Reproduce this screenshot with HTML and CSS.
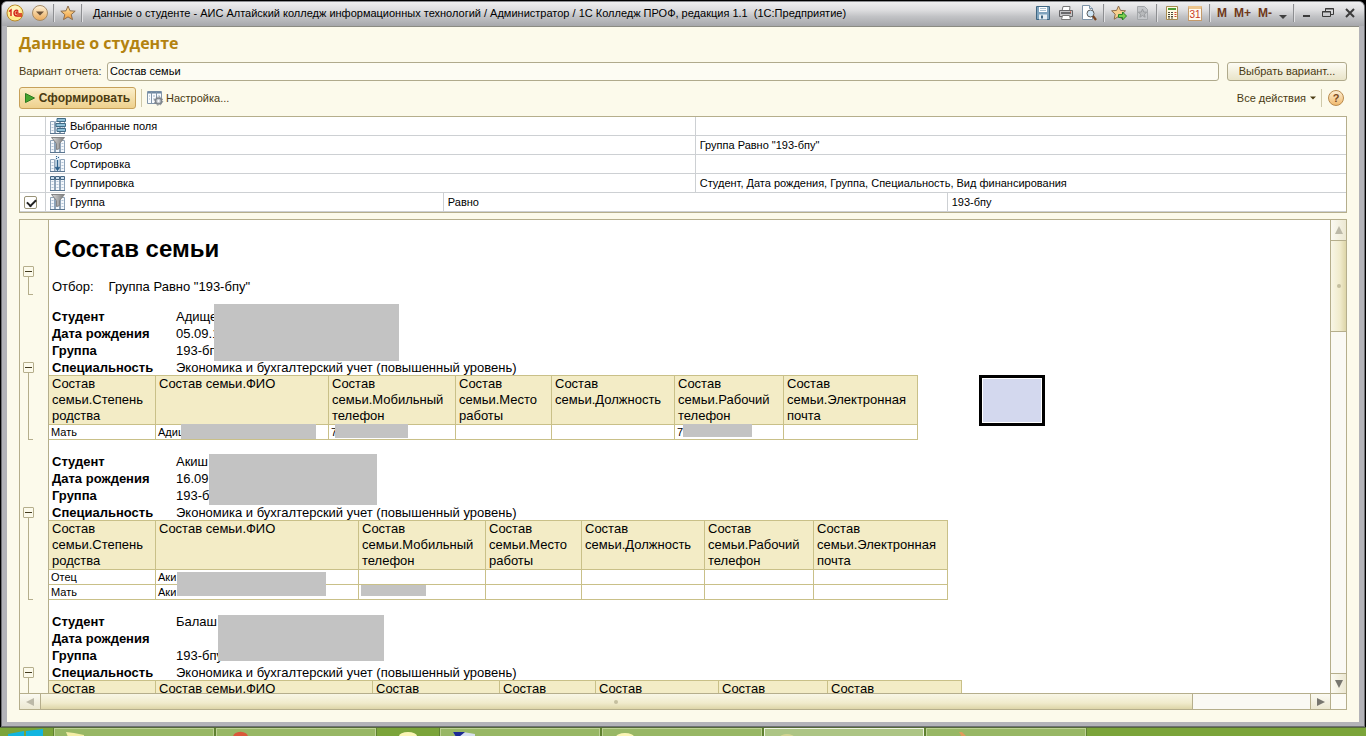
FILE: index.html
```html
<!DOCTYPE html>
<html lang="ru">
<head>
<meta charset="utf-8">
<title>Данные о студенте</title>
<link rel="stylesheet" href="styles.css">
</head>
<body>
<svg class="defs" aria-hidden="true">
  <defs>
    <linearGradient id="gold" x1="0" y1="0" x2="0" y2="1"><stop offset="0" stop-color="#fff3d8"/><stop offset="1" stop-color="#e9a95a"/></linearGradient>
    <linearGradient id="starfill" x1="0" y1="0" x2="0" y2="1"><stop offset="0" stop-color="#ffe9a8"/><stop offset="1" stop-color="#f09a3c"/></linearGradient>
    <linearGradient id="metal" x1="0" y1="0" x2="1" y2="0"><stop offset="0" stop-color="#dcdcdc"/><stop offset="1" stop-color="#7a7a7a"/></linearGradient>
    <symbol id="cols" viewBox="0 0 16 16">
      <path d="M.5 3.500h4v12h-4zM5.500 3.500h4v12h-4zM10.500 3.500h4v12h-4z" fill="#f4f8fc" stroke="#8ea3b8"/>
      <path d="M1.500 6.500h2M1.500 9.500h2M1.500 12.500h2M6.500 6.500h2M6.500 9.500h2M6.500 12.500h2M11.500 6.500h2M11.500 9.500h2M11.500 12.500h2" stroke="#b4c5d6"/>
      <path d="M0 15.500h15" stroke="#5b7690"/>
    </symbol>
    <symbol id="funnel" viewBox="0 0 16 16">
      <use href="#cols"/>
      <path d="M1.500 .5h13l-5 6v5l-3 1v-6z" fill="url(#metal)" stroke="#858585"/>
    </symbol>
  </defs>
</svg>
<div class="window">
  <header class="titlebar">
    <button class="tool" aria-label="Главное меню"><svg width="18" height="18" viewBox="0 0 18 18"><circle cx="9" cy="9" r="8" fill="#ffe98a" stroke="#b9892c"/><circle cx="9" cy="7" r="5.500" fill="#fff5bd"/><path d="M3 7.500l2-1.500v6M12 7c-1-1.500-4-1-4 2s2 3 3 3h5M12.500 8.500c-1-1-2.500-.5-2.500 .5s1 1 1.500 1h4.500" fill="none" stroke="#d21f14" stroke-width="1.400"/></svg></button>
    <button class="tool" aria-label="Меню"><svg width="18" height="18" viewBox="0 0 18 18"><circle cx="9" cy="9" r="7.500" fill="url(#gold)" stroke="#a58a66"/><path d="M5 7.500h8l-4 4z" fill="#6a5138"/></svg></button>
    <span class="sep"></span>
    <button class="tool" aria-label="Избранное"><svg width="16" height="16" viewBox="0 0 16 16"><path d="M8 1l2 4.800 5.200.4-4 3.400 1.300 5L8 11.900l-4.500 2.700 1.300-5-4-3.400L6 5.800z" fill="url(#starfill)" stroke="#8d6d4c"/></svg></button>
    <span class="sep"></span>
    <span class="caption">Данные о студенте - АИС Алтайский колледж информационных технологий / Администратор / 1С Колледж ПРОФ, редакция 1.1&nbsp; (1С:Предприятие)</span>
    <div class="tools">
      <button class="tool" aria-label="Сохранить"><svg width="16" height="16" viewBox="0 0 16 16"><path d="M1.500 1.500h13v13h-13z" fill="#7fa3bd" stroke="#3f6682"/><path d="M4 2h8v5H4z" fill="#fff"/><path d="M5 3.500h6M5 5.500h6" stroke="#a8bfce"/><path d="M4 9.500h8v5H4z" fill="#e6eef3"/><path d="M6 10.500h2v3H6z" fill="#3f6682"/></svg></button>
      <button class="tool" aria-label="Печать"><svg width="16" height="16" viewBox="0 0 16 16"><path d="M4 6l1-4.500h7L11.500 6" fill="#fff" stroke="#777"/><path d="M1.500 5.500h13v6h-13z" fill="#c4c4c6" stroke="#656568"/><path d="M3 8h10" stroke="#4b4b4e" stroke-width="1.500"/><path d="M4.500 10.500h7l1 4h-9z" fill="#fff" stroke="#777"/><path d="M12 7h1" stroke="#e34b2d"/></svg></button>
      <button class="tool" aria-label="Предварительный просмотр"><svg width="16" height="16" viewBox="0 0 16 16"><path d="M1.500 .5h7l3 3v11h-10z" fill="#fff" stroke="#7f94a8"/><path d="M8.500 .5v3h3" fill="#dbe6ef" stroke="#7f94a8"/><circle cx="9.500" cy="8.500" r="3.500" fill="#cfe5f5" stroke="#5a5a5a"/><path d="M12 11l3 4" stroke="#754320" stroke-width="2.200"/></svg></button>
      <span class="sep"></span>
      <button class="tool" aria-label="Добавить в избранное"><svg width="16" height="16" viewBox="0 0 16 16"><path d="M7.500 1l2 4.400 5 .4-3.700 3.400 1 5-4.300-2.700-4.300 2.700 1-5L.6 5.800l5-.4z" fill="#f7cf8e" stroke="#8d6d4c"/><path d="M7.500 9.500h4v-2.500l4 4-4 4v-2.500h-4z" fill="#7cd04d" stroke="#26842b"/></svg></button>
      <button class="tool" aria-label="Перейти по ссылке" disabled><svg width="16" height="16" viewBox="0 0 16 16"><path d="M3.500 1.500h7l3 3v10h-10z" fill="#c5c7ca" stroke="#a4a7aa"/><path d="M8.500 4l1.200 3 3 .2-2.300 2 .7 3-2.600-1.700-2.600 1.700.7-3-2.300-2 3-.2z" fill="#b8babc" stroke="#9a9c9f"/></svg></button>
      <span class="sep"></span>
      <button class="tool" aria-label="Калькулятор"><svg width="16" height="16" viewBox="0 0 16 16"><path d="M2.500 1.500h11v13h-11z" fill="#fffbe3" stroke="#a78b50"/><path d="M4 3h8v2H4z" fill="#4f9d35"/><path d="M4 7.500h2m1 0h2M4 9.500h2m1 0h2M4 11.500h2m1 0h2M4 13h2m1 0h2" stroke="#4d4538"/><path d="M10.500 7.500h2M10.500 9.500h2M10.500 11.500h2" stroke="#d2412a"/></svg></button>
      <button class="tool day" aria-label="Календарь">31</button>
      <span class="sep"></span>
      <button class="tool mem">M</button>
      <button class="tool mem">M+</button>
      <button class="tool mem">M-</button>
      <button class="tool" aria-label="Ещё"><svg width="8" height="16" viewBox="0 0 8 16"><path d="M0 10h8l-4 4z" fill="#3f3f3f"/></svg></button>
      <span class="sep"></span>
    </div>
    <div class="winctl">
      <button class="tool" aria-label="Свернуть"><svg width="9" height="14" viewBox="0 0 9 14"><path d="M1 10h7" stroke="#3b3b3b" stroke-width="2"/></svg></button>
      <button class="tool" aria-label="Восстановить"><svg width="12" height="14" viewBox="0 0 12 14"><path d="M3.500 5V2.500h8v6H9M3 3h9" fill="none" stroke="#3b3b3b"/><path d="M.5 5.500h8v5h-8zM0 6h9" fill="none" stroke="#3b3b3b"/></svg></button>
      <button class="tool" aria-label="Закрыть"><svg width="10" height="14" viewBox="0 0 10 14"><path d="M1 3l8 8M9 3l-8 8" stroke="#3b3b3b" stroke-width="2"/></svg></button>
    </div>
  </header>

  <main class="client">
    <h1 class="heading">Данные о студенте</h1>
    <div class="variant">
      <label for="variant">Вариант отчета:</label>
      <input id="variant" type="text" value="Состав семьи">
      <button class="choose">Выбрать вариант...</button>
    </div>
    <div class="commands">
      <button class="run"><svg width="10" height="10" viewBox="0 0 10 10"><path d="M.5 .5l9 4.500-9 4.500z" fill="#45a62f" stroke="#2e7a22"/></svg>Сформировать</button>
      <span class="vline"></span>
      <button class="flat"><svg width="16" height="16" viewBox="0 0 16 16"><path d="M.5 1.500h14v12H.5z" fill="#f8fbfe" stroke="#8296aa"/><path d="M1 2.500h13" stroke="#6d87a1" stroke-width="2"/><path d="M4.500 2v11M9.500 2v11" stroke="#8296aa"/><path d="M2 6h1M2 9h1M6 6h2M6 9h2M11 6h2" stroke="#a4b4c4"/><circle cx="11.500" cy="11" r="3" fill="#c6cbd0" stroke="#7f858c" stroke-width="1.500"/><circle cx="11.500" cy="11" r="4.200" fill="none" stroke="#7f858c" stroke-dasharray="1.600 1.700"/><circle cx="11.500" cy="11" r="1" fill="#fff"/></svg>Настройка...</button>
      <button class="flat all">Все действия<svg width="6" height="4" viewBox="0 0 6 4"><path d="M0 .5h6l-3 3z" fill="#4a3b12"/></svg></button>
      <span class="vline"></span>
      <button class="help" aria-label="Справка">?</button>
    </div>

    <table class="settings">
      <colgroup><col class="s-check"><col class="s-name"><col class="s-mid"><col class="s-mid"><col></colgroup>
      <tbody>
        <tr><td></td><td colspan="2"><span class="field"><svg width="16" height="16" viewBox="0 0 16 16"><use href="#cols"/><path d="M7 .5h8.500v3H7zM6 5.500h9.500v3H6zM7 10.500h8.500v3H7z" fill="#8fc0d8" stroke="#416b85"/></svg>Выбранные поля</span></td><td colspan="2"></td></tr>
        <tr><td></td><td colspan="2"><span class="field"><svg width="16" height="16"><use href="#funnel"/></svg>Отбор</span></td><td colspan="2">Группа Равно "193-бпу"</td></tr>
        <tr><td></td><td colspan="2"><span class="field"><svg width="16" height="16" viewBox="0 0 16 16"><use href="#cols"/><path d="M5.500 0h4v15h-4z" fill="#dcebf6"/><path d="M7.500 4v9M5.500 11l2 3 2-3" fill="none" stroke="#2f618b" stroke-width="1.400"/><path d="M6 .5h1m1 1h1m-3 1h1" stroke="#2f618b"/></svg>Сортировка</span></td><td colspan="2"></td></tr>
        <tr><td></td><td colspan="2"><span class="field"><svg width="16" height="16" viewBox="0 0 16 16"><use href="#cols"/><path d="M.5 1.500h4v3h-4zM5.500 1.500h4v3h-4zM10.500 1.500h4v3h-4z" fill="#c9dceb" stroke="#446582"/></svg>Группировка</span></td><td colspan="2">Студент, Дата рождения, Группа, Специальность, Вид финансирования</td></tr>
        <tr><td class="checkcell"><input type="checkbox" checked aria-label="Использовать отбор по группе"></td><td><span class="field"><svg width="16" height="16"><use href="#funnel"/></svg>Группа</span></td><td colspan="2">Равно</td><td>193-бпу</td></tr>
      </tbody>
    </table>

    <div class="report">
      <div class="sheet">
        <section class="band intro">
          <div class="gutter"><button class="fold" aria-label="Свернуть отбор"></button><i class="branch"></i></div>
          <div class="body">
            <h2>Состав семьи</h2>
            <p class="filter"><span>Отбор:</span><span>Группа Равно "193-бпу"</span></p>
          </div>
        </section>

        <section class="band">
          <div class="gutter"><button class="fold" aria-label="Свернуть"></button><i class="branch"></i></div>
          <div class="body">
            <dl><dt>Студент</dt><dd>Адище</dd><dt>Дата рождения</dt><dd>05.09.1</dd><dt>Группа</dt><dd>193-бпу</dd><dt>Специальность</dt><dd>Экономика и бухгалтерский учет (повышенный уровень)</dd></dl>
            <i class="mask person-a"></i>
            <div class="row">
              <table class="family">
                <colgroup><col class="c-kin"><col class="c-fio-a"><col class="c-mob"><col class="c-place"><col class="c-post"><col class="c-work"><col class="c-mail"></colgroup>
                <thead><tr><th>Состав семьи.Степень родства</th><th>Состав семьи.ФИО</th><th>Состав семьи.Мобильный телефон</th><th>Состав семьи.Место работы</th><th>Состав семьи.Должность</th><th>Состав семьи.Рабочий телефон</th><th>Состав семьи.Электронная почта</th></tr></thead>
                <tbody><tr><td>Мать</td><td>Адищ<i class="mask fio-a"></i></td><td>7<i class="mask phone-a"></i></td><td></td><td></td><td>7<i class="mask phone-b"></i></td><td></td></tr></tbody>
              </table>
              <div class="cursor"></div>
            </div>
          </div>
        </section>

        <section class="band">
          <div class="gutter"><button class="fold" aria-label="Свернуть"></button><i class="branch"></i></div>
          <div class="body">
            <dl><dt>Студент</dt><dd>Акиш</dd><dt>Дата рождения</dt><dd>16.09</dd><dt>Группа</dt><dd>193-бп</dd><dt>Специальность</dt><dd>Экономика и бухгалтерский учет (повышенный уровень)</dd></dl>
            <i class="mask person-b"></i>
            <table class="family">
              <colgroup><col class="c-kin"><col class="c-fio-b"><col class="c-mob"><col class="c-place"><col class="c-post"><col class="c-work"><col class="c-mail"></colgroup>
              <thead><tr><th>Состав семьи.Степень родства</th><th>Состав семьи.ФИО</th><th>Состав семьи.Мобильный телефон</th><th>Состав семьи.Место работы</th><th>Состав семьи.Должность</th><th>Состав семьи.Рабочий телефон</th><th>Состав семьи.Электронная почта</th></tr></thead>
              <tbody>
                <tr><td>Отец</td><td>Аки<i class="mask fio-b"></i></td><td></td><td></td><td></td><td></td><td></td></tr>
                <tr><td>Мать</td><td>Аки</td><td><i class="mask phone-c"></i></td><td></td><td></td><td></td><td></td></tr>
              </tbody>
            </table>
          </div>
        </section>

        <section class="band">
          <div class="gutter"><button class="fold" aria-label="Свернуть"></button><i class="branch"></i></div>
          <div class="body">
            <dl><dt>Студент</dt><dd>Балаш</dd><dt>Дата рождения</dt><dd></dd><dt>Группа</dt><dd>193-бпу</dd><dt>Специальность</dt><dd>Экономика и бухгалтерский учет (повышенный уровень)</dd></dl>
            <i class="mask person-c"></i>
            <table class="family">
              <colgroup><col class="c-kin"><col class="c-fio-c"><col class="c-mob"><col class="c-place"><col class="c-post"><col class="c-work"><col class="c-mail"></colgroup>
              <thead><tr><th>Состав семьи.Степень родства</th><th>Состав семьи.ФИО</th><th>Состав семьи.Мобильный телефон</th><th>Состав семьи.Место работы</th><th>Состав семьи.Должность</th><th>Состав семьи.Рабочий телефон</th><th>Состав семьи.Электронная почта</th></tr></thead>
            </table>
          </div>
        </section>
      </div>
      <div class="vbar">
        <button class="arrow dim" aria-label="Вверх"><svg width="8" height="8" viewBox="0 0 8 8"><path d="M4 0l4 8H0z"/></svg></button>
        <div class="thumb"></div>
        <div class="track"></div>
        <button class="arrow" aria-label="Вниз"><svg width="8" height="8" viewBox="0 0 8 8"><path d="M0 0h8L4 8z"/></svg></button>
      </div>
      <div class="hbar">
        <button class="arrow dim" aria-label="Влево"><svg width="8" height="8" viewBox="0 0 8 8"><path d="M8 0v8L0 4z"/></svg></button>
        <div class="thumb"></div>
        <div class="track"></div>
        <button class="arrow" aria-label="Вправо"><svg width="8" height="8" viewBox="0 0 8 8"><path d="M0 0l8 4-8 4z"/></svg></button>
      </div>
      <div class="corner"></div>
    </div>
  </main>
</div>

<nav class="taskbar">
  <button class="start" aria-label="Пуск"><svg width="36" height="8" viewBox="0 0 36 8"><path d="M0 6l16-3v5H0zM18 3l17-2v7H18z" fill="#12b5e0"/></svg></button>
  <button class="task" aria-label="Проводник"><svg width="24" height="8" viewBox="0 0 24 8"><path d="M1 3l8 1 10 2v2H3z" fill="#f4eda6"/></svg></button>
  <button class="task" aria-label="Браузер"><svg width="24" height="8" viewBox="0 0 24 8"><path d="M6 8a7 5 0 0 1 15 0z" fill="#d9583a"/></svg></button>
  <button class="pin" aria-label="1С"><svg width="24" height="8" viewBox="0 0 24 8"><path d="M3 8a9 4 0 0 1 18 0z" fill="#fbf5b6"/></svg></button>
  <button class="task" aria-label="Документ"><svg width="24" height="8" viewBox="0 0 24 8"><path d="M2 3h10l12 2v3H5z" fill="#d7dfee"/><path d="M2 3h12l-6 5H5z" fill="#1b2a93"/></svg></button>
  <button class="task" aria-label="1С:Предприятие"><svg width="24" height="8" viewBox="0 0 24 8"><path d="M3 8a9 4 0 0 1 18 0z" fill="#fbf5b6"/></svg></button>
  <button class="task active" aria-label="1С:Предприятие"><svg width="24" height="8" viewBox="0 0 24 8"><path d="M5 8a7 3 0 0 1 14 0z" fill="#d3d492"/></svg></button>
  <button class="task" aria-label="Paint"><svg width="24" height="8" viewBox="0 0 24 8"><path d="M22 3l3 0 5 5h-5z" fill="#e29a5c"/></svg></button>
</nav>
</body>
</html>
```

FILE: styles.css
```css
* { box-sizing: border-box; }

body {
  margin: 0;
  height: 100vh;
  display: flex;
  flex-direction: column;
  overflow: hidden;
  background: #000;
  font: 11px/14px "Liberation Sans", Arial, sans-serif;
  color: #000;
}

button {
  margin: 0;
  padding: 0;
  border: 0;
  background: none;
  font: inherit;
  color: #4a3b12;
}

svg { display: block; flex: none; overflow: visible; }
.defs { position: absolute; width: 0; height: 0; }

.window {
  flex: 1;
  min-height: 0;
  display: flex;
  flex-direction: column;
  margin: 1px 1px 0;
  padding: 0 5px 4px;
  border: 1px solid #6f7074;
  border-top-color: #8d8e92;
  border-radius: 6px 6px 0 0;
  background: #b3b3b8;
}

/* Title bar */
.titlebar {
  flex: none;
  display: flex;
  align-items: center;
  height: 24px;
  margin: 0 -5px;
  padding: 0 3px 2px 0;
  border-radius: 5px 5px 0 0;
  background: linear-gradient(#efeff0, #dcdcde 35%, #c2c3c6 60%, #a6a7ab);
}

.tool { display: flex; align-items: center; justify-content: center; }
.titlebar > .tool { width: 24px; }
.titlebar > .tool:first-child { width: 26px; }
.titlebar > .sep { margin: 0 1px; }
.sep {
  width: 2px;
  height: 18px;
  border-left: 1px solid #8d8e91;
  background: #e0e0e2;
}
.caption {
  flex: 1;
  min-width: 0;
  overflow: hidden;
  white-space: nowrap;
  padding-left: 9px;
  line-height: 18px;
}
.tools { display: flex; align-items: center; gap: 7px; }
.tools .sep { margin: 0 -1px; }
.mem { font-weight: bold; font-size: 12px; color: #6e3819; }
.day {
  width: 14px;
  height: 15px;
  margin: 0 1px;
  border: 1px solid #c49a6a;
  border-top: 3px solid #ecc48c;
  background: #fffaf0;
  color: #c8371f;
  font-size: 10px;
  line-height: 11px;
}
.winctl { display: flex; align-items: center; gap: 11px; padding: 0 6px 0 8px; }

/* Form */
.client {
  flex: 1;
  min-height: 0;
  display: flex;
  flex-direction: column;
  padding: 5px 12px 12px;
  border-top: 1px solid #8b8b82;
  background: #fcfaeb;
}
.heading {
  margin: 0;
  font: bold 16px/22px "Open Sans", "Noto Sans", sans-serif;
  color: #b3820f;
}
.variant { display: flex; align-items: center; height: 20px; margin-top: 7px; color: #4a3b12; }
.variant label { width: 88px; }
.variant input {
  flex: 1;
  min-width: 0;
  height: 19px;
  padding: 0 2px;
  border: 1px solid #b0aa8c;
  border-radius: 3px;
  background: #fdfcf3;
  font: inherit;
  color: #000;
}
.choose {
  width: 120px;
  height: 19px;
  margin-left: 8px;
  border: 1px solid #b0aa8c;
  border-radius: 3px;
  background: linear-gradient(#fdfcf4, #e9e4c9);
}
.commands { display: flex; align-items: center; height: 22px; margin: 6px 0 7px; }
.run {
  display: flex;
  align-items: center;
  justify-content: center;
  gap: 4px;
  width: 117px;
  height: 22px;
  border: 1px solid #c7a15a;
  border-radius: 3px;
  background: linear-gradient(#fbefca, #eed08c);
  font-weight: bold;
  font-size: 12px;
}
.vline { width: 1px; height: 18px; margin: 0 5px; background: #cfc9aa; }
.flat { display: flex; align-items: center; gap: 3px; }
.all { margin-left: auto; gap: 4px; }
.help {
  width: 16px;
  height: 16px;
  margin: 0 3px 0 1px;
  border: 1px solid #b98b4e;
  border-radius: 50%;
  background: linear-gradient(#fdeed2, #f1ba6e);
  line-height: 14px;
  font-weight: bold;
  color: #7a4a1e;
}

/* Report settings */
.settings {
  width: 100%;
  table-layout: fixed;
  border-collapse: separate;
  border-spacing: 0;
  border: 1px solid #b5ae8c;
  background: #fff;
}
.settings td {
  height: 19px;
  padding: 0 4px;
  border-right: 1px solid #cdd0d3;
  border-bottom: 1px solid #cdd0d3;
  white-space: nowrap;
}
.settings td:last-child { border-right: 0; }
.s-check { width: 26px; }
.s-name { width: 30%; }
.s-mid { width: 19%; }
.field { display: flex; align-items: center; gap: 4px; }
.checkcell input {
  appearance: none;
  display: block;
  width: 13px;
  height: 13px;
  margin: 0;
  border: 1px solid #9a9478;
  border-radius: 2px;
  background: #fff;
}
.checkcell input:checked::before {
  content: "";
  display: block;
  width: 7px;
  height: 4px;
  margin: 2px;
  border: solid #222;
  border-width: 0 0 2px 2px;
  transform: rotate(-45deg);
}

/* Report */
.report {
  flex: 1;
  min-height: 0;
  display: grid;
  grid-template: minmax(0, 1fr) 16px / minmax(0, 1fr) 16px;
  margin-top: 6px;
  border: 1px solid #b5ae8c;
  background: #fff;
}
.sheet { overflow: hidden; font-size: 13px; }
.band { display: flex; }
.gutter {
  flex: none;
  width: 29px;
  display: flex;
  flex-direction: column;
  padding: 55px 0 12px 3px;
  border-right: 1px solid #b5ae8c;
  background: #fcfaeb;
}
.fold {
  flex: none;
  width: 11px;
  height: 11px;
  padding: 4px 1px;
  border: 1px solid #b5ae8c;
  border-radius: 1px;
  background: #443c20 content-box;
}
.branch {
  flex: 1;
  width: 5px;
  margin-left: 5px;
  border: solid #b5ae8c;
  border-width: 0 0 1px 1px;
}
.body { position: relative; flex: 1; min-width: 0; padding-bottom: 12px; }
.intro .gutter { padding-top: 46px; }
.intro h2 { margin: 0; padding: 14px 0 0 5px; font-size: 24px; line-height: 30px; }
.filter { display: flex; gap: 15px; margin: 15px 0 0; padding-left: 3px; line-height: 16px; }
dl {
  display: grid;
  grid-template-columns: 124px 1fr;
  grid-auto-rows: 17px;
  margin: 0;
  padding-left: 3px;
  line-height: 19px;
}
dt { font-weight: bold; }
dd { margin: 0; white-space: nowrap; }

.row { display: flex; align-items: flex-start; gap: 61px; }
.family {
  width: 0;
  table-layout: fixed;
  border-collapse: separate;
  border-spacing: 0;
  border-top: 1px solid #c9c088;
}
.family th, .family td {
  position: relative;
  border: solid #c9c088;
  border-width: 0 1px 1px 0;
  text-align: left;
  vertical-align: top;
}
.family th { height: 49px; padding: 0 3px; background: #f3ecc6; font-weight: normal; line-height: 16px; }
.family td { height: 15px; padding: 0 2px; font-size: 11px; line-height: 14px; }
.c-kin { width: 107px; }
.c-fio-a { width: 173px; }
.c-fio-b { width: 203px; }
.c-fio-c { width: 217px; }
.c-mob { width: 127px; }
.c-place { width: 96px; }
.c-post { width: 123px; }
.c-work { width: 109px; }
.c-mail { width: 134px; }
.cursor {
  width: 66px;
  height: 51px;
  border: 3px solid #000;
  box-shadow: inset 0 0 0 1px #fff;
  background: #d3d8ee;
}

/* Grey patches hiding personal data */
.mask { position: absolute; z-index: 1; background: #c3c3c3; }
.person-a { left: 165px; top: -3px; width: 185px; height: 57px; }
.person-b { left: 160px; top: 2px; width: 168px; height: 51px; }
.person-c { left: 169px; top: 3px; width: 166px; height: 46px; }
.fio-a { left: 25px; top: -1px; width: 135px; height: 15px; }
.phone-a { left: 6px; top: -1px; width: 73px; height: 14px; }
.phone-b { left: 8px; top: -1px; width: 69px; height: 13px; }
.fio-b { left: 21px; top: 2px; width: 149px; height: 24px; }
.phone-c { left: 2px; top: 0; width: 65px; height: 11px; }

/* Scroll bars */
.vbar { display: flex; flex-direction: column; border-left: 1px solid #b5ae8c; }
.hbar { display: flex; border-top: 1px solid #b5ae8c; }
.corner { border: solid #b5ae8c; border-width: 1px 0 0 1px; background: #fcfbf5; }
.arrow { flex: none; display: flex; align-items: center; justify-content: center; fill: #77766f; }
.dim { fill: #bcb9a8; }
.vbar .arrow { height: 20px; background: linear-gradient(90deg, #fbfaf2, #ece8d2); }
.hbar .arrow { width: 20px; background: linear-gradient(#fbfaf2, #ece8d2); }
.track { flex: 1; background: #faf9f4; }
.thumb { display: flex; align-items: center; justify-content: center; }
.thumb::before { content: ""; width: 4px; height: 4px; border-radius: 50%; background: #c4bf9f; }
.vbar .thumb {
  height: 92px;
  border: solid #b5ae8c;
  border-width: 1px 0;
  background: linear-gradient(90deg, #f8f6e6, #f0ebcc 60%, #ddd5a8);
}
.vbar .arrow:last-child { border-top: 1px solid #b5ae8c; }
.hbar .thumb {
  width: 88%;
  border: solid #b5ae8c;
  border-width: 0 1px;
  background: linear-gradient(#f8f6e6, #f0ebcc 60%, #ddd5a8);
}
.hbar .arrow:last-child { border-left: 1px solid #b5ae8c; }

/* Taskbar */
.taskbar {
  flex: none;
  display: flex;
  gap: 2px;
  height: 9px;
  overflow: hidden;
  border-top: 1px solid #55693a;
  background: #7ba43a;
}
.start { width: 52px; padding-left: 8px; }
.task {
  flex: 0 0 160px;
  padding-left: 10px;
  border: 1px solid #bdd093;
  border-bottom: 0;
  outline: 1px solid #5f8130;
  background: #98b765;
}
.active { border-color: #eef3df; background: #adc585; }
.pin { flex: 0 0 60px; padding-left: 18px; }
```
